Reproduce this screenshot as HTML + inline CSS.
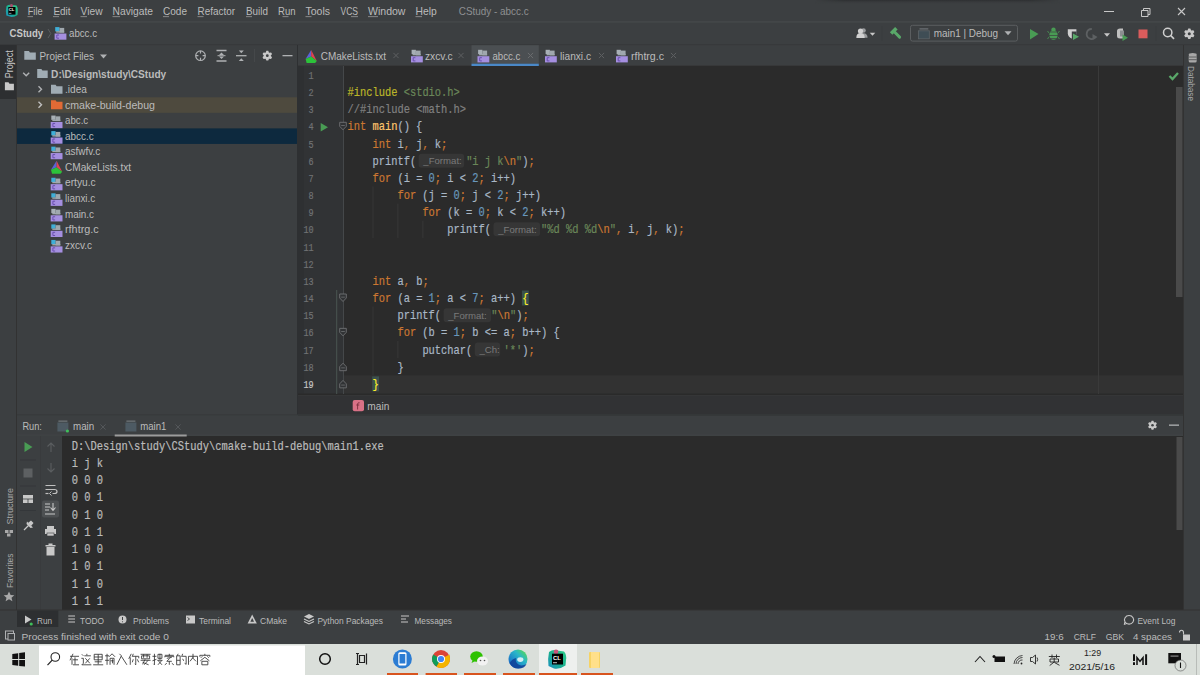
<!DOCTYPE html>
<html><head><meta charset="utf-8">
<style>
*{margin:0;padding:0}
html,body{width:1200px;height:675px;overflow:hidden;background:#3C3F41}
body{font-family:"Liberation Sans",sans-serif}
svg{display:block}
</style></head><body>
<svg width="1200" height="675" viewBox="0 0 1200 675">
<rect x="0.00" y="0.00" width="1200.00" height="675.00" fill="#3C3F41" />
<defs><linearGradient id="sh" x1="0" y1="0" x2="0" y2="1"><stop offset="0" stop-color="#2C2E30" stop-opacity="0.9"/><stop offset="1" stop-color="#3C3F41" stop-opacity="0"/></linearGradient><linearGradient id="shx" x1="0" y1="0" x2="1" y2="0"><stop offset="0" stop-color="#fff" stop-opacity="0"/><stop offset="0.12" stop-color="#fff" stop-opacity="1"/><stop offset="0.88" stop-color="#fff" stop-opacity="1"/><stop offset="1" stop-color="#fff" stop-opacity="0"/></linearGradient><mask id="shm"><rect x="815" y="0" width="245" height="5" fill="url(#shx)"/></mask></defs>
<rect x="815" y="0" width="245" height="4.5" fill="url(#sh)" mask="url(#shm)"/>
<rect x="0.00" y="21.20" width="1200.00" height="1.40" fill="#46494B" />
<rect x="0.00" y="44.20" width="1200.00" height="1.00" fill="#37393B" />
<rect x="16.00" y="45.00" width="1.00" height="565.00" fill="#323232" />
<rect x="0.00" y="45.00" width="16.00" height="54.00" fill="#2D2F31" />
<rect x="297.00" y="45.00" width="1.00" height="370.00" fill="#2E3032" />
<rect x="298.00" y="65.50" width="885.00" height="1.00" fill="#323232" />
<rect x="298.00" y="66.00" width="46.00" height="328.00" fill="#313335" />
<rect x="298.00" y="66.00" width="6.00" height="328.00" fill="#2E3032" />
<rect x="344.00" y="66.00" width="839.00" height="328.00" fill="#2B2B2B" />
<rect x="298.00" y="393.50" width="885.00" height="22.00" fill="#313234" />
<rect x="298.00" y="393.50" width="885.00" height="1.60" fill="#2A2A2A" />
<rect x="298.00" y="395.10" width="885.00" height="0.90" fill="#363738" />
<rect x="1183.00" y="45.00" width="1.00" height="565.00" fill="#323232" />
<rect x="17.00" y="434.60" width="1166.00" height="1.00" fill="#424547" />
<rect x="17.00" y="414.30" width="1166.00" height="1.00" fill="#37393B" />
<rect x="40.00" y="436.00" width="1.00" height="174.00" fill="#393B3D" />
<rect x="62.00" y="436.00" width="1121.00" height="174.00" fill="#2B2B2B" />
<rect x="0.00" y="609.50" width="1200.00" height="1.00" fill="#323232" />
<rect x="0.00" y="644.00" width="1200.00" height="31.00" fill="#DADFDA" />
<rect x="39.00" y="645.50" width="266.00" height="29.50" fill="#FFFFFF" />
<rect x="17.00" y="97.30" width="280.00" height="15.55" fill="#4E4A3E" />
<rect x="17.00" y="128.40" width="280.00" height="15.55" fill="#0D293E" />
<rect x="471.50" y="45.20" width="67.30" height="18.50" fill="#4B4F52" />
<rect x="471.50" y="63.70" width="67.30" height="2.30" fill="#4A88C7" />
<defs><linearGradient id="clg2" x1="1" y1="0" x2="0" y2="1"><stop offset="0" stop-color="#2FD08A"/><stop offset="0.55" stop-color="#1BAE90"/><stop offset="1" stop-color="#1C8FC4"/></linearGradient></defs>
<path d="M6.5 6 Q9 4.3 11.5 5 L16.5 5.5 Q18.3 8 17.8 11 L17.5 15 Q14 17.3 10.5 16.8 L6.3 15.5 Q5.4 10.5 6.5 6 Z" fill="url(#clg2)"/>
<circle cx="11.5" cy="5.6" r="1.6" fill="#A8506E"/>
<rect x="8.30" y="7.00" width="7.20" height="7.60" fill="#000" />
<text x="8.8" y="11" font-family="'Liberation Sans'" font-weight="bold" font-size="4.2" fill="#fff">CL</text>
<rect x="8.80" y="12.90" width="2.60" height="0.70" fill="#ccc" />
<rect x="1104.00" y="11.00" width="10.00" height="1.00" fill="#C8C8C8" />
<path d="M1141.5 10.5 h6.5 v6 h-6.5 Z M1143.5 10.5 v-2 h6.5 v6 h-2" stroke="#C8C8C8" stroke-width="1" fill="none"/>
<path d="M1178 8 L1185 15 M1185 8 L1178 15" stroke="#C8C8C8" stroke-width="1.1"/>
<path d="M48 29 l2.8 4.5 l-2.8 4.5" stroke="#5A5D5F" stroke-width="1" fill="none"/>
<rect x="55.20" y="27.10" width="4.3" height="4.3" fill="#3FAFD8"/>
<rect x="59.50" y="27.90" width="4.7" height="4.7" fill="#A0A8AE"/>
<rect x="56.20" y="31.20" width="8" height="1.4" fill="#A0A8AE"/>
<rect x="54.60" y="33.50" width="11.8" height="6.2" fill="#A58FE0"/>
<path d="M59.00 35.00 h-2.2 v3.2 h2.2" stroke="#6B4FAF" stroke-width="1" fill="none"/>
<circle cx="863.5" cy="30.5" r="2.3" fill="#9A9C9E"/><path d="M859.5 37.8 q0 -4.6 4 -4.6 q4 0 4 4.6 Z" fill="#9A9C9E"/>
<circle cx="860.5" cy="31" r="2.6" fill="#D0D0D0"/><path d="M856.3 38 q0 -5 4.2 -5 q4.2 0 4.2 5 Z" fill="#D0D0D0"/>
<path d="M869.75 32.80 h5.50 l-2.75 3.00 Z" fill="#C8C8C8"/>
<rect x="881.50" y="26.00" width="1.00" height="15.00" fill="#393C3E" />
<path d="M893.8 31.3 L899.6 37.1" stroke="#59A869" stroke-width="2.9" stroke-linecap="round"/>
<path d="M889.9 32.3 L895.1 27.1 L897.6 29.6 L892.4 34.8 Z" fill="#59A869"/>
<rect x="910.5" y="25.3" width="107" height="15.8" rx="2" fill="none" stroke="#5B5E60" stroke-width="1"/>
<rect x="918.5" y="30.8" width="10.8" height="8" fill="#3F4D55" stroke="#5E6468" stroke-width="0.8"/><rect x="919.5" y="28.3" width="8.8" height="1.2" fill="#6E7478"/>
<path d="M1004.50 31.20 h7.00 l-3.50 4.00 Z" fill="#AFB1B3"/>
<path d="M1030 29 L1038.5 34 L1030 39.5 Z" fill="#499C54"/>
<ellipse cx="1053.5" cy="35" rx="4.2" ry="4.8" fill="#499C54"/><circle cx="1053.5" cy="29.8" r="2.2" fill="#499C54"/>
<path d="M1048 32 h11 M1048 35.5 h11 M1048.5 38.5 h10" stroke="#3C3F41" stroke-width="0.7"/>
<path d="M1047.5 31.5 l1.5 1 M1059.5 31.5 l-1.5 1 M1047.5 38.5 l1.5 -1 M1059.5 38.5 l-1.5 -1" stroke="#499C54" stroke-width="1"/>
<path d="M1067.8 29.3 h8.6 v4 q0 4 -4.3 5.4 q-4.3 -1.4 -4.3 -5.4 Z" fill="#CFCFCF"/>
<path d="M1071.8 31.5 h4.8 v7.5 h-4.8 Z" fill="#3C3F41"/>
<path d="M1073 33.6 l6 3.2 l-6 3.2 Z" fill="#59A869"/>
<path d="M1091.8 29 a5 5 0 1 0 4.2 7.5" stroke="#5D6062" stroke-width="1.8" fill="none"/><path d="M1092.5 34 l5 3 l-5 3 Z" fill="#5D6062"/>
<path d="M1104.00 33.25 h6.00 l-3.00 3.50 Z" fill="#C8C8C8"/>
<path d="M1117 31 q0 -2.5 3 -2.5 h3 v10 h-3 q-3 0 -3 -2.5 Z" fill="#C0C0C0"/><rect x="1120" y="30.5" width="4" height="6" fill="#8C8E90"/>
<path d="M1122.5 34.5 l5.5 3.2 l-5.5 3.2 Z" fill="#499C54"/>
<rect x="1138.50" y="29.50" width="9.00" height="8.80" fill="#DB5C5C" />
<rect x="1155.50" y="26.00" width="1.00" height="15.00" fill="#393C3E" />
<circle cx="1167.7" cy="32.5" r="4.2" stroke="#CFCFCF" stroke-width="1.5" fill="none"/><path d="M1170.7 35.5 L1174 38.8" stroke="#CFCFCF" stroke-width="1.7"/>
<path d="M1187.46 30.52 L1188.27 28.40 L1190.33 28.40 L1191.14 30.52 L1191.14 30.52 L1193.38 30.16 L1194.41 31.94 L1192.97 33.70 L1192.97 33.70 L1194.41 35.46 L1193.38 37.24 L1191.14 36.88 L1191.14 36.88 L1190.33 39.00 L1188.27 39.00 L1187.46 36.88 L1187.46 36.88 L1185.22 37.24 L1184.19 35.46 L1185.63 33.70 L1185.63 33.70 L1184.19 31.94 L1185.22 30.16 L1187.46 30.52 Z" fill="#C8C8C8"/>
<circle cx="1189.3" cy="33.7" r="1.51" fill="#3C3F41"/>
<g transform="translate(13.3 78.2) rotate(-90)">
<text x="0.00" y="0.00" font-family='"Liberation Sans"' font-size="10" fill="#C8C8C8" textLength="28.02" lengthAdjust="spacingAndGlyphs"  xml:space="preserve">Project</text>
</g>
<path d="M4.90 82.20 h3.60 l1 1.5 h4.40 v6.50 h-9.00 Z" fill="#C8C8C8"/>
<g transform="translate(13 524.6) rotate(-90)">
<text x="0.00" y="0.00" font-family='"Liberation Sans"' font-size="9.4" fill="#A8A8A8" textLength="36.62" lengthAdjust="spacingAndGlyphs"  xml:space="preserve">Structure</text>
</g>
<rect x="5" y="530" width="3.5" height="3" fill="#A8A8A8"/><rect x="9.5" y="530" width="3.5" height="3" fill="#A8A8A8"/><rect x="7" y="533.5" width="3.5" height="3" fill="#A8A8A8"/>
<g transform="translate(13 588) rotate(-90)">
<text x="0.00" y="0.00" font-family='"Liberation Sans"' font-size="9.4" fill="#A8A8A8" textLength="34.42" lengthAdjust="spacingAndGlyphs"  xml:space="preserve">Favorites</text>
</g>
<path d="M9 591.5 L10.6 595 L14.3 595.3 L11.5 597.7 L12.4 601.3 L9 599.3 L5.6 601.3 L6.5 597.7 L3.7 595.3 L7.4 595 Z" fill="#A8A8A8"/>
<g transform="translate(1188 66) rotate(90)">
<text x="0.00" y="0.00" font-family='"Liberation Sans"' font-size="8.6" fill="#A8A8A8" textLength="35.01" lengthAdjust="spacingAndGlyphs"  xml:space="preserve">Database</text>
</g>
<ellipse cx="1192.7" cy="54.5" rx="4" ry="1.5" fill="#A8A8A8"/><rect x="1188.7" y="54.5" width="8" height="8" rx="1.5" fill="#A8A8A8"/><path d="M1188.7 57 h8 M1188.7 59.7 h8" stroke="#3C3F41" stroke-width="0.7"/>
<path d="M24.30 51.00 h4.60 l1 1.5 h5.90 v7.20 h-11.50 Z" fill="#A0ACB4"/>
<path d="M100.00 54.60 h7.00 l-3.50 3.80 Z" fill="#AFB1B3"/>
<circle cx="200.5" cy="55.7" r="4.8" stroke="#AFB1B3" stroke-width="1.2" fill="none"/><path d="M200.5 51 v2.6 M200.5 57.8 v2.6 M195.8 55.7 h2.6 M202.6 55.7 h2.6" stroke="#AFB1B3" stroke-width="1.2"/>
<path d="M216.5 50.5 h10 M216.5 61 h10" stroke="#AFB1B3" stroke-width="1.3"/><path d="M219 55 l2.5 -2.5 l2.5 2.5 Z M219 56.5 l2.5 2.5 l2.5 -2.5 Z" fill="#AFB1B3"/><path d="M217.5 55.7 h8" stroke="#AFB1B3" stroke-width="1"/>
<path d="M236 55.7 h10.5" stroke="#AFB1B3" stroke-width="1.3"/><path d="M238.8 50.5 l2.5 2.8 l2.5 -2.8 Z M238.8 61 l2.5 -2.8 l2.5 2.8 Z" fill="#AFB1B3"/>
<rect x="254.00" y="49.00" width="1.00" height="13.00" fill="#45484A" />
<path d="M265.60 52.76 L266.35 50.79 L268.25 50.79 L269.00 52.76 L269.00 52.76 L271.07 52.42 L272.03 54.07 L270.70 55.70 L270.70 55.70 L272.03 57.33 L271.07 58.98 L269.00 58.64 L269.00 58.64 L268.25 60.61 L266.35 60.61 L265.60 58.64 L265.60 58.64 L263.53 58.98 L262.57 57.33 L263.90 55.70 L263.90 55.70 L262.57 54.07 L263.53 52.42 L265.60 52.76 Z" fill="#C8C8C8"/>
<circle cx="267.3" cy="55.7" r="1.40" fill="#3C3F41"/>
<rect x="282.50" y="55.00" width="10.00" height="1.30" fill="#AFB1B3" />
<path d="M23.20 72.70 l3 3 l3 -3" stroke="#AFB1B3" stroke-width="1.4" fill="none"/>
<path d="M37.20 69.00 h4.20 l1 1.5 h5.30 v7.50 h-10.50 Z" fill="#A0ACB4"/>
<path d="M38.50 86.25 l3 3 l-3 3" stroke="#AFB1B3" stroke-width="1.4" fill="none"/>
<path d="M51.00 84.75 h4.60 l1 1.5 h5.90 v7.50 h-11.50 Z" fill="#A0ACB4"/>
<path d="M38.50 101.80 l3 3 l-3 3" stroke="#C0C0C0" stroke-width="1.4" fill="none"/>
<path d="M51.00 100.30 h4.60 l1 1.5 h5.90 v7.50 h-11.50 Z" fill="#E26A35"/>
<rect x="51.30" y="115.55" width="4.3" height="4.3" fill="#A8B0B6"/>
<rect x="55.60" y="116.35" width="4.7" height="4.7" fill="#A0A8AE"/>
<rect x="52.30" y="119.65" width="8" height="1.4" fill="#A0A8AE"/>
<rect x="50.70" y="121.95" width="11.8" height="6.2" fill="#A58FE0"/>
<path d="M55.10 123.45 h-2.2 v3.2 h2.2" stroke="#6B4FAF" stroke-width="1" fill="none"/>
<rect x="51.30" y="131.10" width="4.3" height="4.3" fill="#3FAFD8"/>
<rect x="55.60" y="131.90" width="4.7" height="4.7" fill="#A0A8AE"/>
<rect x="52.30" y="135.20" width="8" height="1.4" fill="#A0A8AE"/>
<rect x="50.70" y="137.50" width="11.8" height="6.2" fill="#A58FE0"/>
<path d="M55.10 139.00 h-2.2 v3.2 h2.2" stroke="#6B4FAF" stroke-width="1" fill="none"/>
<rect x="51.30" y="146.65" width="4.3" height="4.3" fill="#3FAFD8"/>
<rect x="55.60" y="147.45" width="4.7" height="4.7" fill="#A0A8AE"/>
<rect x="52.30" y="150.75" width="8" height="1.4" fill="#A0A8AE"/>
<rect x="50.70" y="153.05" width="11.8" height="6.2" fill="#A58FE0"/>
<path d="M55.10 154.55 h-2.2 v3.2 h2.2" stroke="#6B4FAF" stroke-width="1" fill="none"/>
<path d="M56.60 160.70 L51.00 169.70 L56.60 167.20 Z" fill="#5A62D6"/>
<path d="M56.60 160.70 L62.20 171.70 L56.60 167.20 Z" fill="#E0424F"/>
<path d="M51.00 169.70 L56.60 167.20 L62.20 171.70 L60.50 173.70 L52.00 173.70 Z" fill="#2CC23A"/>
<rect x="51.30" y="177.75" width="4.3" height="4.3" fill="#3FAFD8"/>
<rect x="55.60" y="178.55" width="4.7" height="4.7" fill="#A0A8AE"/>
<rect x="52.30" y="181.85" width="8" height="1.4" fill="#A0A8AE"/>
<rect x="50.70" y="184.15" width="11.8" height="6.2" fill="#A58FE0"/>
<path d="M55.10 185.65 h-2.2 v3.2 h2.2" stroke="#6B4FAF" stroke-width="1" fill="none"/>
<rect x="51.30" y="193.30" width="4.3" height="4.3" fill="#3FAFD8"/>
<rect x="55.60" y="194.10" width="4.7" height="4.7" fill="#A0A8AE"/>
<rect x="52.30" y="197.40" width="8" height="1.4" fill="#A0A8AE"/>
<rect x="50.70" y="199.70" width="11.8" height="6.2" fill="#A58FE0"/>
<path d="M55.10 201.20 h-2.2 v3.2 h2.2" stroke="#6B4FAF" stroke-width="1" fill="none"/>
<rect x="51.30" y="208.85" width="4.3" height="4.3" fill="#A8B0B6"/>
<rect x="55.60" y="209.65" width="4.7" height="4.7" fill="#A0A8AE"/>
<rect x="52.30" y="212.95" width="8" height="1.4" fill="#A0A8AE"/>
<rect x="50.70" y="215.25" width="11.8" height="6.2" fill="#A58FE0"/>
<path d="M55.10 216.75 h-2.2 v3.2 h2.2" stroke="#6B4FAF" stroke-width="1" fill="none"/>
<rect x="51.30" y="224.40" width="4.3" height="4.3" fill="#3FAFD8"/>
<rect x="55.60" y="225.20" width="4.7" height="4.7" fill="#A0A8AE"/>
<rect x="52.30" y="228.50" width="8" height="1.4" fill="#A0A8AE"/>
<rect x="50.70" y="230.80" width="11.8" height="6.2" fill="#A58FE0"/>
<path d="M55.10 232.30 h-2.2 v3.2 h2.2" stroke="#6B4FAF" stroke-width="1" fill="none"/>
<rect x="51.30" y="239.95" width="4.3" height="4.3" fill="#3FAFD8"/>
<rect x="55.60" y="240.75" width="4.7" height="4.7" fill="#A0A8AE"/>
<rect x="52.30" y="244.05" width="8" height="1.4" fill="#A0A8AE"/>
<rect x="50.70" y="246.35" width="11.8" height="6.2" fill="#A58FE0"/>
<path d="M55.10 247.85 h-2.2 v3.2 h2.2" stroke="#6B4FAF" stroke-width="1" fill="none"/>
<path d="M311.20 50.00 L305.60 59.00 L311.20 56.50 Z" fill="#5A62D6"/>
<path d="M311.20 50.00 L316.80 61.00 L311.20 56.50 Z" fill="#E0424F"/>
<path d="M305.60 59.00 L311.20 56.50 L316.80 61.00 L315.10 63.00 L306.60 63.00 Z" fill="#2CC23A"/>
<path d="M393.40 52.90 L398.60 58.10 M398.60 52.90 L393.40 58.10" stroke="#5E6062" stroke-width="1"/>
<rect x="411.60" y="49.80" width="4.3" height="4.3" fill="#A8B0B6"/>
<rect x="415.90" y="50.60" width="4.7" height="4.7" fill="#A0A8AE"/>
<rect x="412.60" y="53.90" width="8" height="1.4" fill="#A0A8AE"/>
<rect x="411.00" y="56.20" width="11.8" height="6.2" fill="#A58FE0"/>
<path d="M415.40 57.70 h-2.2 v3.2 h2.2" stroke="#6B4FAF" stroke-width="1" fill="none"/>
<path d="M458.40 52.90 L463.60 58.10 M463.60 52.90 L458.40 58.10" stroke="#5E6062" stroke-width="1"/>
<rect x="478.10" y="49.80" width="4.3" height="4.3" fill="#A8B0B6"/>
<rect x="482.40" y="50.60" width="4.7" height="4.7" fill="#A0A8AE"/>
<rect x="479.10" y="53.90" width="8" height="1.4" fill="#A0A8AE"/>
<rect x="477.50" y="56.20" width="11.8" height="6.2" fill="#A58FE0"/>
<path d="M481.90 57.70 h-2.2 v3.2 h2.2" stroke="#6B4FAF" stroke-width="1" fill="none"/>
<path d="M527.90 52.90 L533.10 58.10 M533.10 52.90 L527.90 58.10" stroke="#6A6C6E" stroke-width="1"/>
<rect x="545.60" y="49.80" width="4.3" height="4.3" fill="#A8B0B6"/>
<rect x="549.90" y="50.60" width="4.7" height="4.7" fill="#A0A8AE"/>
<rect x="546.60" y="53.90" width="8" height="1.4" fill="#A0A8AE"/>
<rect x="545.00" y="56.20" width="11.8" height="6.2" fill="#A58FE0"/>
<path d="M549.40 57.70 h-2.2 v3.2 h2.2" stroke="#6B4FAF" stroke-width="1" fill="none"/>
<path d="M598.90 52.90 L604.10 58.10 M604.10 52.90 L598.90 58.10" stroke="#5E6062" stroke-width="1"/>
<rect x="616.60" y="49.80" width="4.3" height="4.3" fill="#A8B0B6"/>
<rect x="620.90" y="50.60" width="4.7" height="4.7" fill="#A0A8AE"/>
<rect x="617.60" y="53.90" width="8" height="1.4" fill="#A0A8AE"/>
<rect x="616.00" y="56.20" width="11.8" height="6.2" fill="#A58FE0"/>
<path d="M620.40 57.70 h-2.2 v3.2 h2.2" stroke="#6B4FAF" stroke-width="1" fill="none"/>
<path d="M670.90 52.90 L676.10 58.10 M676.10 52.90 L670.90 58.10" stroke="#5E6062" stroke-width="1"/>
<rect x="344.00" y="375.40" width="839.00" height="18.00" fill="#323232" />
<rect x="521.92" y="290.54" width="6.84" height="15.00" fill="#3B514D" />
<rect x="372.16" y="376.39" width="6.84" height="15.00" fill="#3B514D" />
<rect x="1098.00" y="66.00" width="1.00" height="328.00" fill="#3A3A3A" />
<rect x="343.00" y="66.00" width="1.00" height="328.00" fill="#45484A" />
<rect x="372.46" y="186.42" width="1.00" height="51.54" fill="#373737" />
<rect x="397.42" y="203.59" width="1.00" height="34.37" fill="#373737" />
<rect x="422.38" y="220.76" width="1.00" height="17.20" fill="#373737" />
<rect x="372.46" y="306.61" width="1.00" height="68.71" fill="#373737" />
<rect x="397.42" y="340.95" width="1.00" height="17.20" fill="#373737" />
<path d="M320.7 123 L328 127.3 L320.7 131.6 Z" fill="#499C54"/>
<rect x="336.20" y="290.00" width="1.00" height="104.00" fill="#4A5551" />
<path d="M339.7 122.31 h6.6 v4 l-3.3 3.5 l-3.3 -3.5 Z" stroke="#707274" stroke-width="0.9" fill="#313335"/>
<rect x="341.20" y="125.01" width="3.60" height="0.80" fill="#707274" />
<path d="M339.7 294.01 h6.6 v4 l-3.3 3.5 l-3.3 -3.5 Z" stroke="#707274" stroke-width="0.9" fill="#313335"/>
<rect x="341.20" y="296.71" width="3.60" height="0.80" fill="#707274" />
<path d="M339.7 328.35 h6.6 v4 l-3.3 3.5 l-3.3 -3.5 Z" stroke="#707274" stroke-width="0.9" fill="#313335"/>
<rect x="341.20" y="331.05" width="3.60" height="0.80" fill="#707274" />
<path d="M339.7 370.69 h6.6 v-4 l-3.3 -3.5 l-3.3 3.5 Z" stroke="#707274" stroke-width="0.9" fill="#313335"/>
<rect x="341.20" y="367.49" width="3.60" height="0.80" fill="#707274" />
<path d="M339.7 387.86 h6.6 v-4 l-3.3 -3.5 l-3.3 3.5 Z" stroke="#707274" stroke-width="0.9" fill="#313335"/>
<rect x="341.20" y="384.66" width="3.60" height="0.80" fill="#707274" />
<path d="M1169.5 76 L1172.5 79 L1178 73" stroke="#59A869" stroke-width="2.3" fill="none"/>
<rect x="1176.00" y="87.00" width="6.50" height="210.00" fill="#4A4A4A" />
<rect x="352.7" y="400" width="11.3" height="11.3" rx="2" fill="#D97186"/>
<path d="M359.6 402.8 q-1.8 -0.5 -2 1.2 v5.5 M356.3 405 h3" stroke="#7A2E3C" stroke-width="0.9" fill="none"/>
<rect x="57.40" y="422.5" width="11" height="9" fill="#4D5A63"/><rect x="58.40" y="420.5" width="9" height="1.3" fill="#6E7478"/>
<circle cx="67.40" cy="431" r="1.6" fill="#3FBF5A"/>
<rect x="125.40" y="422.5" width="11" height="9" fill="#4D5A63"/><rect x="126.40" y="420.5" width="9" height="1.3" fill="#6E7478"/>
<path d="M100.40 424.40 L105.60 429.60 M105.60 424.40 L100.40 429.60" stroke="#54575A" stroke-width="1"/>
<path d="M175.40 424.40 L180.60 429.60 M180.60 424.40 L175.40 429.60" stroke="#54575A" stroke-width="1"/>
<path d="M1150.94 422.49 L1151.62 420.68 L1153.38 420.68 L1154.06 422.49 L1154.06 422.49 L1155.97 422.18 L1156.85 423.70 L1155.63 425.20 L1155.63 425.20 L1156.85 426.70 L1155.97 428.22 L1154.06 427.91 L1154.06 427.91 L1153.38 429.72 L1151.62 429.72 L1150.94 427.91 L1150.94 427.91 L1149.03 428.22 L1148.15 426.70 L1149.37 425.20 L1149.37 425.20 L1148.15 423.70 L1149.03 422.18 L1150.94 422.49 Z" fill="#C8C8C8"/>
<circle cx="1152.5" cy="425.2" r="1.29" fill="#3C3F41"/>
<rect x="1169.00" y="424.50" width="10.00" height="1.30" fill="#AFB1B3" />
<path d="M24.5 442 L32.5 447 L24.5 452 Z" fill="#499C54"/>
<path d="M51 443 v9 M47.5 446.5 l3.5 -3.5 l3.5 3.5" stroke="#5B5E60" stroke-width="1.1" fill="none"/>
<path d="M51 463 v9 M47.5 468.5 l3.5 3.5 l3.5 -3.5" stroke="#5B5E60" stroke-width="1.1" fill="none"/>
<rect x="23.50" y="468.50" width="9.00" height="9.00" fill="#5D6062" />
<rect x="20.00" y="459.50" width="16.00" height="1.00" fill="#34373A" />
<rect x="20.00" y="485.50" width="16.00" height="1.00" fill="#34373A" />
<rect x="20.00" y="510.00" width="16.00" height="1.00" fill="#34373A" />
<path d="M45.5 485.5 h10 M45.5 489.5 h9 q2.5 0 2.5 2 q0 2 -2.5 2 h-2" stroke="#C0C0C0" stroke-width="1.2" fill="none"/><path d="M51.5 491.5 l-2 2 l2 2" stroke="#C0C0C0" stroke-width="1" fill="none"/><path d="M45.5 493.5 h3" stroke="#C0C0C0" stroke-width="1.2"/>
<rect x="23" y="495" width="10" height="3.6" fill="#C8C8C8"/><rect x="23" y="499.4" width="4.6" height="3.6" fill="#C8C8C8"/><rect x="28.4" y="499.4" width="4.6" height="3.6" fill="#C8C8C8"/>
<rect x="42" y="500.5" width="17" height="17" rx="2" fill="#4D5052"/>
<path d="M45 504 h5 M45 507 h5 M45 510 h4 M45 514 h10 M53 503 v7 M50.5 507.5 l2.5 2.8 l2.5 -2.8" stroke="#C8C8C8" stroke-width="1.1" fill="none"/>
<path d="M24 530 L28.5 525.5" stroke="#C8C8C8" stroke-width="1.2"/><path d="M27 521.5 L33 527.5 L30.5 528 L26.5 524 Z" fill="#C8C8C8"/><path d="M28 523 l3 -2.5 l2.5 2.5 l-2.5 3 Z" fill="#C8C8C8"/>
<rect x="47" y="526" width="7" height="3" fill="#C8C8C8"/><rect x="45" y="529" width="11" height="5" fill="#C8C8C8"/><rect x="47" y="533" width="7" height="3" fill="#C8C8C8" stroke="#3C3F41" stroke-width="0.6"/>
<rect x="45.5" y="545" width="10" height="1.5" fill="#C8C8C8"/><rect x="48.5" y="543.5" width="4" height="1.5" fill="#C8C8C8"/><rect x="46.5" y="547" width="8" height="8.5" fill="#C8C8C8"/>
<rect x="1176.50" y="437.00" width="6.00" height="93.00" fill="#4A4A4A" />
<rect x="17.00" y="610.50" width="41.30" height="16.50" fill="#2D2F31" />
<path d="M25 615.5 L31.5 619.5 L25 623.5 Z" fill="#C8C8C8"/><circle cx="31.2" cy="624" r="1.6" fill="#3FBF5A"/>
<path d="M68 616 h7 M68 619 h7 M68 622 h7" stroke="#C8C8C8" stroke-width="1.1"/><path d="M68 616 h1 M68 619 h1 M68 622 h1" stroke="#3C3F41" stroke-width="0.5"/>
<circle cx="122.5" cy="619.5" r="4" fill="#C8C8C8"/><path d="M122.5 617 v3" stroke="#3C3F41" stroke-width="1"/><circle cx="122.5" cy="621.8" r="0.55" fill="#3C3F41"/>
<rect x="186" y="615.5" width="9" height="8" fill="#C8C8C8"/><path d="M187.5 617.5 l2 1.5 l-2 1.5" stroke="#3C3F41" stroke-width="0.9" fill="none"/>
<path d="M252.2 614.5 L256.8 623.5 L247.6 623.5 Z" fill="#C8C8C8"/><path d="M252.2 618 L254 621.8 L250.4 621.8 Z" fill="#3C3F41"/>
<path d="M309 614 L314 616.5 L309 619 L304 616.5 Z" fill="#C8C8C8"/><path d="M304 619 L309 621.5 L314 619 M304 621.5 L309 624 L314 621.5" stroke="#C8C8C8" stroke-width="1.1" fill="none"/>
<path d="M401 616 h8 M401 619 h5 M401 622 h7" stroke="#C8C8C8" stroke-width="1.2"/>
<path d="M1129 615.5 a4.6 4.3 0 1 0 0.1 0 Z" stroke="#C8C8C8" stroke-width="1.1" fill="none"/><path d="M1125 622 l-0.8 2.5 l3 -1.2" stroke="#C8C8C8" stroke-width="1" fill="none"/>
<rect x="5.5" y="631" width="8" height="8" stroke="#AFB1B3" stroke-width="1" fill="none"/><rect x="8" y="633.5" width="6.5" height="6.5" fill="#3C3F41" stroke="#AFB1B3" stroke-width="1"/>
<rect x="1183" y="634.5" width="7" height="6" fill="#C8C8C8"/><path d="M1183.5 634.5 v-2 q0 -2.2 -2 -2.2 q-2 0 -2 2.2" stroke="#C8C8C8" stroke-width="1.1" fill="none"/>
<text x="27.75" y="15.00" font-family='"Liberation Sans"' font-size="10.2" fill="#BBBBBB" textLength="14.76" lengthAdjust="spacingAndGlyphs"  xml:space="preserve">File</text>
<text x="53.50" y="15.00" font-family='"Liberation Sans"' font-size="10.2" fill="#BBBBBB" textLength="16.98" lengthAdjust="spacingAndGlyphs"  xml:space="preserve">Edit</text>
<text x="80.60" y="15.00" font-family='"Liberation Sans"' font-size="10.2" fill="#BBBBBB" textLength="22.00" lengthAdjust="spacingAndGlyphs"  xml:space="preserve">View</text>
<text x="112.60" y="15.00" font-family='"Liberation Sans"' font-size="10.2" fill="#BBBBBB" textLength="40.42" lengthAdjust="spacingAndGlyphs"  xml:space="preserve">Navigate</text>
<text x="163.00" y="15.00" font-family='"Liberation Sans"' font-size="10.2" fill="#BBBBBB" textLength="24.01" lengthAdjust="spacingAndGlyphs"  xml:space="preserve">Code</text>
<text x="197.60" y="15.00" font-family='"Liberation Sans"' font-size="10.2" fill="#BBBBBB" textLength="37.39" lengthAdjust="spacingAndGlyphs"  xml:space="preserve">Refactor</text>
<text x="246.00" y="15.00" font-family='"Liberation Sans"' font-size="10.2" fill="#BBBBBB" textLength="21.99" lengthAdjust="spacingAndGlyphs"  xml:space="preserve">Build</text>
<text x="278.00" y="15.00" font-family='"Liberation Sans"' font-size="10.2" fill="#BBBBBB" textLength="17.50" lengthAdjust="spacingAndGlyphs"  xml:space="preserve">Run</text>
<text x="305.50" y="15.00" font-family='"Liberation Sans"' font-size="10.2" fill="#BBBBBB" textLength="24.50" lengthAdjust="spacingAndGlyphs"  xml:space="preserve">Tools</text>
<text x="340.50" y="15.00" font-family='"Liberation Sans"' font-size="10.2" fill="#BBBBBB" textLength="17.51" lengthAdjust="spacingAndGlyphs"  xml:space="preserve">VCS</text>
<text x="368.00" y="15.00" font-family='"Liberation Sans"' font-size="10.2" fill="#BBBBBB" textLength="37.47" lengthAdjust="spacingAndGlyphs"  xml:space="preserve">Window</text>
<text x="415.50" y="15.00" font-family='"Liberation Sans"' font-size="10.2" fill="#BBBBBB" textLength="21.27" lengthAdjust="spacingAndGlyphs"  xml:space="preserve">Help</text>
<rect x="27.50" y="16.30" width="5.50" height="0.80" fill="#9A9A9A" />
<rect x="53.00" y="16.30" width="6.00" height="0.80" fill="#9A9A9A" />
<rect x="80.50" y="16.30" width="6.50" height="0.80" fill="#9A9A9A" />
<rect x="112.50" y="16.30" width="7.50" height="0.80" fill="#9A9A9A" />
<rect x="163.00" y="16.30" width="6.00" height="0.80" fill="#9A9A9A" />
<rect x="197.50" y="16.30" width="6.00" height="0.80" fill="#9A9A9A" />
<rect x="246.00" y="16.30" width="6.00" height="0.80" fill="#9A9A9A" />
<rect x="282.50" y="16.30" width="6.00" height="0.80" fill="#9A9A9A" />
<rect x="305.50" y="16.30" width="6.00" height="0.80" fill="#9A9A9A" />
<rect x="351.00" y="16.30" width="7.00" height="0.80" fill="#9A9A9A" />
<rect x="368.00" y="16.30" width="10.00" height="0.80" fill="#9A9A9A" />
<rect x="415.50" y="16.30" width="6.50" height="0.80" fill="#9A9A9A" />
<text x="458.75" y="15.00" font-family='"Liberation Sans"' font-size="10.2" fill="#8E9092" textLength="69.98" lengthAdjust="spacingAndGlyphs"  xml:space="preserve">CStudy - abcc.c</text>
<text x="9.60" y="37.10" font-family='"Liberation Sans"' font-size="10.2" font-weight="bold" fill="#C8C8C8" textLength="33.50" lengthAdjust="spacingAndGlyphs"  xml:space="preserve">CStudy</text>
<text x="69.00" y="37.10" font-family='"Liberation Sans"' font-size="10.2" fill="#BBBBBB" textLength="28.00" lengthAdjust="spacingAndGlyphs"  xml:space="preserve">abcc.c</text>
<text x="933.70" y="37.00" font-family='"Liberation Sans"' font-size="10.2" fill="#BBBBBB" textLength="64.31" lengthAdjust="spacingAndGlyphs"  xml:space="preserve">main1 | Debug</text>
<text x="39.50" y="59.70" font-family='"Liberation Sans"' font-size="10.2" fill="#BBBBBB" textLength="54.52" lengthAdjust="spacingAndGlyphs"  xml:space="preserve">Project Files</text>
<text x="51.10" y="77.60" font-family='"Liberation Sans"' font-size="10.2" font-weight="bold" fill="#BBBBBB" textLength="115.10" lengthAdjust="spacingAndGlyphs"  xml:space="preserve">D:\Design\study\CStudy</text>
<text x="65.00" y="93.15" font-family='"Liberation Sans"' font-size="10.2" fill="#BBBBBB" textLength="21.89" lengthAdjust="spacingAndGlyphs"  xml:space="preserve">.idea</text>
<text x="65.00" y="108.70" font-family='"Liberation Sans"' font-size="10.2" fill="#BBBBBB" textLength="89.90" lengthAdjust="spacingAndGlyphs"  xml:space="preserve">cmake-build-debug</text>
<text x="65.00" y="124.25" font-family='"Liberation Sans"' font-size="10.2" fill="#BBBBBB" textLength="23.20" lengthAdjust="spacingAndGlyphs"  xml:space="preserve">abc.c</text>
<text x="65.00" y="139.80" font-family='"Liberation Sans"' font-size="10.2" fill="#BBBBBB" textLength="28.70" lengthAdjust="spacingAndGlyphs"  xml:space="preserve">abcc.c</text>
<text x="65.00" y="155.35" font-family='"Liberation Sans"' font-size="10.2" fill="#BBBBBB" textLength="35.28" lengthAdjust="spacingAndGlyphs"  xml:space="preserve">asfwfv.c</text>
<text x="65.00" y="170.90" font-family='"Liberation Sans"' font-size="10.2" fill="#BBBBBB" textLength="66.02" lengthAdjust="spacingAndGlyphs"  xml:space="preserve">CMakeLists.txt</text>
<text x="65.00" y="186.45" font-family='"Liberation Sans"' font-size="10.2" fill="#BBBBBB" textLength="30.71" lengthAdjust="spacingAndGlyphs"  xml:space="preserve">ertyu.c</text>
<text x="65.00" y="202.00" font-family='"Liberation Sans"' font-size="10.2" fill="#BBBBBB" textLength="30.22" lengthAdjust="spacingAndGlyphs"  xml:space="preserve">lianxi.c</text>
<text x="65.00" y="217.55" font-family='"Liberation Sans"' font-size="10.2" fill="#BBBBBB" textLength="29.00" lengthAdjust="spacingAndGlyphs"  xml:space="preserve">main.c</text>
<text x="65.00" y="233.10" font-family='"Liberation Sans"' font-size="10.2" fill="#BBBBBB" textLength="33.72" lengthAdjust="spacingAndGlyphs"  xml:space="preserve">rfhtrg.c</text>
<text x="65.00" y="248.65" font-family='"Liberation Sans"' font-size="10.2" fill="#BBBBBB" textLength="26.99" lengthAdjust="spacingAndGlyphs"  xml:space="preserve">zxcv.c</text>
<text x="320.70" y="59.75" font-family='"Liberation Sans"' font-size="10.2" fill="#BBBBBB" textLength="65.32" lengthAdjust="spacingAndGlyphs"  xml:space="preserve">CMakeLists.txt</text>
<text x="425.00" y="59.75" font-family='"Liberation Sans"' font-size="10.2" fill="#BBBBBB" textLength="27.69" lengthAdjust="spacingAndGlyphs"  xml:space="preserve">zxcv.c</text>
<text x="492.50" y="59.75" font-family='"Liberation Sans"' font-size="10.2" fill="#BBBBBB" textLength="27.80" lengthAdjust="spacingAndGlyphs"  xml:space="preserve">abcc.c</text>
<text x="560.00" y="59.75" font-family='"Liberation Sans"' font-size="10.2" fill="#BBBBBB" textLength="31.02" lengthAdjust="spacingAndGlyphs"  xml:space="preserve">lianxi.c</text>
<text x="631.00" y="59.75" font-family='"Liberation Sans"' font-size="10.2" fill="#BBBBBB" textLength="33.02" lengthAdjust="spacingAndGlyphs"  xml:space="preserve">rfhtrg.c</text>
<text x="308.60" y="78.83" font-family='"Liberation Mono"' font-size="10.6" fill="#707274" stroke="#707274" stroke-width="0.2" textLength="5.10" lengthAdjust="spacingAndGlyphs"  xml:space="preserve">1</text>
<text x="308.60" y="96.00" font-family='"Liberation Mono"' font-size="10.6" fill="#707274" stroke="#707274" stroke-width="0.2" textLength="5.10" lengthAdjust="spacingAndGlyphs"  xml:space="preserve">2</text>
<text x="308.60" y="113.17" font-family='"Liberation Mono"' font-size="10.6" fill="#707274" stroke="#707274" stroke-width="0.2" textLength="5.10" lengthAdjust="spacingAndGlyphs"  xml:space="preserve">3</text>
<text x="308.60" y="130.34" font-family='"Liberation Mono"' font-size="10.6" fill="#707274" stroke="#707274" stroke-width="0.2" textLength="5.10" lengthAdjust="spacingAndGlyphs"  xml:space="preserve">4</text>
<text x="308.60" y="147.51" font-family='"Liberation Mono"' font-size="10.6" fill="#707274" stroke="#707274" stroke-width="0.2" textLength="5.10" lengthAdjust="spacingAndGlyphs"  xml:space="preserve">5</text>
<text x="308.60" y="164.68" font-family='"Liberation Mono"' font-size="10.6" fill="#707274" stroke="#707274" stroke-width="0.2" textLength="5.10" lengthAdjust="spacingAndGlyphs"  xml:space="preserve">6</text>
<text x="308.60" y="181.85" font-family='"Liberation Mono"' font-size="10.6" fill="#707274" stroke="#707274" stroke-width="0.2" textLength="5.10" lengthAdjust="spacingAndGlyphs"  xml:space="preserve">7</text>
<text x="308.60" y="199.02" font-family='"Liberation Mono"' font-size="10.6" fill="#707274" stroke="#707274" stroke-width="0.2" textLength="5.10" lengthAdjust="spacingAndGlyphs"  xml:space="preserve">8</text>
<text x="308.60" y="216.19" font-family='"Liberation Mono"' font-size="10.6" fill="#707274" stroke="#707274" stroke-width="0.2" textLength="5.10" lengthAdjust="spacingAndGlyphs"  xml:space="preserve">9</text>
<text x="303.50" y="233.36" font-family='"Liberation Mono"' font-size="10.6" fill="#707274" stroke="#707274" stroke-width="0.2" textLength="10.20" lengthAdjust="spacingAndGlyphs"  xml:space="preserve">10</text>
<text x="303.50" y="250.53" font-family='"Liberation Mono"' font-size="10.6" fill="#707274" stroke="#707274" stroke-width="0.2" textLength="10.20" lengthAdjust="spacingAndGlyphs"  xml:space="preserve">11</text>
<text x="303.50" y="267.70" font-family='"Liberation Mono"' font-size="10.6" fill="#707274" stroke="#707274" stroke-width="0.2" textLength="10.20" lengthAdjust="spacingAndGlyphs"  xml:space="preserve">12</text>
<text x="303.50" y="284.87" font-family='"Liberation Mono"' font-size="10.6" fill="#707274" stroke="#707274" stroke-width="0.2" textLength="10.20" lengthAdjust="spacingAndGlyphs"  xml:space="preserve">13</text>
<text x="303.50" y="302.04" font-family='"Liberation Mono"' font-size="10.6" fill="#707274" stroke="#707274" stroke-width="0.2" textLength="10.20" lengthAdjust="spacingAndGlyphs"  xml:space="preserve">14</text>
<text x="303.50" y="319.21" font-family='"Liberation Mono"' font-size="10.6" fill="#707274" stroke="#707274" stroke-width="0.2" textLength="10.20" lengthAdjust="spacingAndGlyphs"  xml:space="preserve">15</text>
<text x="303.50" y="336.38" font-family='"Liberation Mono"' font-size="10.6" fill="#707274" stroke="#707274" stroke-width="0.2" textLength="10.20" lengthAdjust="spacingAndGlyphs"  xml:space="preserve">16</text>
<text x="303.50" y="353.55" font-family='"Liberation Mono"' font-size="10.6" fill="#707274" stroke="#707274" stroke-width="0.2" textLength="10.20" lengthAdjust="spacingAndGlyphs"  xml:space="preserve">17</text>
<text x="303.50" y="370.72" font-family='"Liberation Mono"' font-size="10.6" fill="#707274" stroke="#707274" stroke-width="0.2" textLength="10.20" lengthAdjust="spacingAndGlyphs"  xml:space="preserve">18</text>
<text x="303.50" y="387.89" font-family='"Liberation Mono"' font-size="10.6" fill="#C8C8C8" stroke="#C8C8C8" stroke-width="0.2" textLength="10.20" lengthAdjust="spacingAndGlyphs"  xml:space="preserve">19</text>
<text x="347.50" y="96.00" font-family='"Liberation Mono"' font-size="12.2" fill="#BBB529" stroke="#BBB529" stroke-width="0.2" textLength="49.92" lengthAdjust="spacingAndGlyphs"  xml:space="preserve">#include</text>
<text x="403.66" y="96.00" font-family='"Liberation Mono"' font-size="12.2" fill="#6A8759" stroke="#6A8759" stroke-width="0.2" textLength="56.16" lengthAdjust="spacingAndGlyphs"  xml:space="preserve">&lt;stdio.h&gt;</text>
<text x="347.50" y="113.17" font-family='"Liberation Mono"' font-size="12.2" fill="#808080" stroke="#808080" stroke-width="0.2" textLength="118.56" lengthAdjust="spacingAndGlyphs"  xml:space="preserve">//#include &lt;math.h&gt;</text>
<text x="347.50" y="130.34" font-family='"Liberation Mono"' font-size="12.2" fill="#CC7832" stroke="#CC7832" stroke-width="0.2" textLength="18.72" lengthAdjust="spacingAndGlyphs"  xml:space="preserve">int</text>
<text x="372.46" y="130.34" font-family='"Liberation Mono"' font-size="12.2" fill="#FFC66D" stroke="#FFC66D" stroke-width="0.2" textLength="24.96" lengthAdjust="spacingAndGlyphs"  xml:space="preserve">main</text>
<text x="397.42" y="130.34" font-family='"Liberation Mono"' font-size="12.2" fill="#A9B7C6" stroke="#A9B7C6" stroke-width="0.2" textLength="24.96" lengthAdjust="spacingAndGlyphs"  xml:space="preserve">() {</text>
<text x="372.46" y="147.51" font-family='"Liberation Mono"' font-size="12.2" fill="#CC7832" stroke="#CC7832" stroke-width="0.2" textLength="18.72" lengthAdjust="spacingAndGlyphs"  xml:space="preserve">int</text>
<text x="391.18" y="147.51" font-family='"Liberation Mono"' font-size="12.2" fill="#A9B7C6" stroke="#A9B7C6" stroke-width="0.2" textLength="12.48" lengthAdjust="spacingAndGlyphs"  xml:space="preserve"> i</text>
<text x="403.66" y="147.51" font-family='"Liberation Mono"' font-size="12.2" fill="#CC7832" stroke="#CC7832" stroke-width="0.2" textLength="6.24" lengthAdjust="spacingAndGlyphs"  xml:space="preserve">,</text>
<text x="409.90" y="147.51" font-family='"Liberation Mono"' font-size="12.2" fill="#A9B7C6" stroke="#A9B7C6" stroke-width="0.2" textLength="12.48" lengthAdjust="spacingAndGlyphs"  xml:space="preserve"> j</text>
<text x="422.38" y="147.51" font-family='"Liberation Mono"' font-size="12.2" fill="#CC7832" stroke="#CC7832" stroke-width="0.2" textLength="6.24" lengthAdjust="spacingAndGlyphs"  xml:space="preserve">,</text>
<text x="428.62" y="147.51" font-family='"Liberation Mono"' font-size="12.2" fill="#A9B7C6" stroke="#A9B7C6" stroke-width="0.2" textLength="12.48" lengthAdjust="spacingAndGlyphs"  xml:space="preserve"> k</text>
<text x="441.10" y="147.51" font-family='"Liberation Mono"' font-size="12.2" fill="#CC7832" stroke="#CC7832" stroke-width="0.2" textLength="6.24" lengthAdjust="spacingAndGlyphs"  xml:space="preserve">;</text>
<text x="347.50" y="164.68" font-family='"Liberation Mono"' font-size="12.2" fill="#A9B7C6" stroke="#A9B7C6" stroke-width="0.2" textLength="68.64" lengthAdjust="spacingAndGlyphs"  xml:space="preserve">    printf(</text>
<rect x="418.64" y="153.68" width="45.5" height="14" rx="3" fill="#363636"/>
<text x="423.33" y="164.18" font-family='"Liberation Sans"' font-size="9.6" fill="#7A7A7A"  xml:space="preserve">_Format:</text>
<text x="466.14" y="164.68" font-family='"Liberation Mono"' font-size="12.2" fill="#6A8759" stroke="#6A8759" stroke-width="0.2" textLength="37.44" lengthAdjust="spacingAndGlyphs"  xml:space="preserve">&quot;i j k</text>
<text x="503.58" y="164.68" font-family='"Liberation Mono"' font-size="12.2" fill="#CC7832" stroke="#CC7832" stroke-width="0.2" textLength="12.48" lengthAdjust="spacingAndGlyphs"  xml:space="preserve">\n</text>
<text x="516.06" y="164.68" font-family='"Liberation Mono"' font-size="12.2" fill="#6A8759" stroke="#6A8759" stroke-width="0.2" textLength="6.24" lengthAdjust="spacingAndGlyphs"  xml:space="preserve">&quot;</text>
<text x="522.30" y="164.68" font-family='"Liberation Mono"' font-size="12.2" fill="#A9B7C6" stroke="#A9B7C6" stroke-width="0.2" textLength="6.24" lengthAdjust="spacingAndGlyphs"  xml:space="preserve">)</text>
<text x="528.54" y="164.68" font-family='"Liberation Mono"' font-size="12.2" fill="#CC7832" stroke="#CC7832" stroke-width="0.2" textLength="6.24" lengthAdjust="spacingAndGlyphs"  xml:space="preserve">;</text>
<text x="372.46" y="181.85" font-family='"Liberation Mono"' font-size="12.2" fill="#CC7832" stroke="#CC7832" stroke-width="0.2" textLength="18.72" lengthAdjust="spacingAndGlyphs"  xml:space="preserve">for</text>
<text x="391.18" y="181.85" font-family='"Liberation Mono"' font-size="12.2" fill="#A9B7C6" stroke="#A9B7C6" stroke-width="0.2" textLength="37.44" lengthAdjust="spacingAndGlyphs"  xml:space="preserve"> (i = </text>
<text x="428.62" y="181.85" font-family='"Liberation Mono"' font-size="12.2" fill="#6897BB" stroke="#6897BB" stroke-width="0.2" textLength="6.24" lengthAdjust="spacingAndGlyphs"  xml:space="preserve">0</text>
<text x="434.86" y="181.85" font-family='"Liberation Mono"' font-size="12.2" fill="#CC7832" stroke="#CC7832" stroke-width="0.2" textLength="6.24" lengthAdjust="spacingAndGlyphs"  xml:space="preserve">;</text>
<text x="441.10" y="181.85" font-family='"Liberation Mono"' font-size="12.2" fill="#A9B7C6" stroke="#A9B7C6" stroke-width="0.2" textLength="31.20" lengthAdjust="spacingAndGlyphs"  xml:space="preserve"> i &lt; </text>
<text x="472.30" y="181.85" font-family='"Liberation Mono"' font-size="12.2" fill="#6897BB" stroke="#6897BB" stroke-width="0.2" textLength="6.24" lengthAdjust="spacingAndGlyphs"  xml:space="preserve">2</text>
<text x="478.54" y="181.85" font-family='"Liberation Mono"' font-size="12.2" fill="#CC7832" stroke="#CC7832" stroke-width="0.2" textLength="6.24" lengthAdjust="spacingAndGlyphs"  xml:space="preserve">;</text>
<text x="484.78" y="181.85" font-family='"Liberation Mono"' font-size="12.2" fill="#A9B7C6" stroke="#A9B7C6" stroke-width="0.2" textLength="31.20" lengthAdjust="spacingAndGlyphs"  xml:space="preserve"> i++)</text>
<text x="397.42" y="199.02" font-family='"Liberation Mono"' font-size="12.2" fill="#CC7832" stroke="#CC7832" stroke-width="0.2" textLength="18.72" lengthAdjust="spacingAndGlyphs"  xml:space="preserve">for</text>
<text x="416.14" y="199.02" font-family='"Liberation Mono"' font-size="12.2" fill="#A9B7C6" stroke="#A9B7C6" stroke-width="0.2" textLength="37.44" lengthAdjust="spacingAndGlyphs"  xml:space="preserve"> (j = </text>
<text x="453.58" y="199.02" font-family='"Liberation Mono"' font-size="12.2" fill="#6897BB" stroke="#6897BB" stroke-width="0.2" textLength="6.24" lengthAdjust="spacingAndGlyphs"  xml:space="preserve">0</text>
<text x="459.82" y="199.02" font-family='"Liberation Mono"' font-size="12.2" fill="#CC7832" stroke="#CC7832" stroke-width="0.2" textLength="6.24" lengthAdjust="spacingAndGlyphs"  xml:space="preserve">;</text>
<text x="466.06" y="199.02" font-family='"Liberation Mono"' font-size="12.2" fill="#A9B7C6" stroke="#A9B7C6" stroke-width="0.2" textLength="31.20" lengthAdjust="spacingAndGlyphs"  xml:space="preserve"> j &lt; </text>
<text x="497.26" y="199.02" font-family='"Liberation Mono"' font-size="12.2" fill="#6897BB" stroke="#6897BB" stroke-width="0.2" textLength="6.24" lengthAdjust="spacingAndGlyphs"  xml:space="preserve">2</text>
<text x="503.50" y="199.02" font-family='"Liberation Mono"' font-size="12.2" fill="#CC7832" stroke="#CC7832" stroke-width="0.2" textLength="6.24" lengthAdjust="spacingAndGlyphs"  xml:space="preserve">;</text>
<text x="509.74" y="199.02" font-family='"Liberation Mono"' font-size="12.2" fill="#A9B7C6" stroke="#A9B7C6" stroke-width="0.2" textLength="31.20" lengthAdjust="spacingAndGlyphs"  xml:space="preserve"> j++)</text>
<text x="422.38" y="216.19" font-family='"Liberation Mono"' font-size="12.2" fill="#CC7832" stroke="#CC7832" stroke-width="0.2" textLength="18.72" lengthAdjust="spacingAndGlyphs"  xml:space="preserve">for</text>
<text x="441.10" y="216.19" font-family='"Liberation Mono"' font-size="12.2" fill="#A9B7C6" stroke="#A9B7C6" stroke-width="0.2" textLength="37.44" lengthAdjust="spacingAndGlyphs"  xml:space="preserve"> (k = </text>
<text x="478.54" y="216.19" font-family='"Liberation Mono"' font-size="12.2" fill="#6897BB" stroke="#6897BB" stroke-width="0.2" textLength="6.24" lengthAdjust="spacingAndGlyphs"  xml:space="preserve">0</text>
<text x="484.78" y="216.19" font-family='"Liberation Mono"' font-size="12.2" fill="#CC7832" stroke="#CC7832" stroke-width="0.2" textLength="6.24" lengthAdjust="spacingAndGlyphs"  xml:space="preserve">;</text>
<text x="491.02" y="216.19" font-family='"Liberation Mono"' font-size="12.2" fill="#A9B7C6" stroke="#A9B7C6" stroke-width="0.2" textLength="31.20" lengthAdjust="spacingAndGlyphs"  xml:space="preserve"> k &lt; </text>
<text x="522.22" y="216.19" font-family='"Liberation Mono"' font-size="12.2" fill="#6897BB" stroke="#6897BB" stroke-width="0.2" textLength="6.24" lengthAdjust="spacingAndGlyphs"  xml:space="preserve">2</text>
<text x="528.46" y="216.19" font-family='"Liberation Mono"' font-size="12.2" fill="#CC7832" stroke="#CC7832" stroke-width="0.2" textLength="6.24" lengthAdjust="spacingAndGlyphs"  xml:space="preserve">;</text>
<text x="534.70" y="216.19" font-family='"Liberation Mono"' font-size="12.2" fill="#A9B7C6" stroke="#A9B7C6" stroke-width="0.2" textLength="31.20" lengthAdjust="spacingAndGlyphs"  xml:space="preserve"> k++)</text>
<text x="347.50" y="233.36" font-family='"Liberation Mono"' font-size="12.2" fill="#A9B7C6" stroke="#A9B7C6" stroke-width="0.2" textLength="143.52" lengthAdjust="spacingAndGlyphs"  xml:space="preserve">                printf(</text>
<rect x="493.52" y="222.36" width="46.5" height="14" rx="3" fill="#363636"/>
<text x="498.21" y="232.86" font-family='"Liberation Sans"' font-size="9.6" fill="#7A7A7A"  xml:space="preserve">_Format:</text>
<text x="541.02" y="233.36" font-family='"Liberation Mono"' font-size="12.2" fill="#6A8759" stroke="#6A8759" stroke-width="0.2" textLength="56.16" lengthAdjust="spacingAndGlyphs"  xml:space="preserve">&quot;%d %d %d</text>
<text x="597.18" y="233.36" font-family='"Liberation Mono"' font-size="12.2" fill="#CC7832" stroke="#CC7832" stroke-width="0.2" textLength="12.48" lengthAdjust="spacingAndGlyphs"  xml:space="preserve">\n</text>
<text x="609.66" y="233.36" font-family='"Liberation Mono"' font-size="12.2" fill="#6A8759" stroke="#6A8759" stroke-width="0.2" textLength="6.24" lengthAdjust="spacingAndGlyphs"  xml:space="preserve">&quot;</text>
<text x="615.90" y="233.36" font-family='"Liberation Mono"' font-size="12.2" fill="#CC7832" stroke="#CC7832" stroke-width="0.2" textLength="6.24" lengthAdjust="spacingAndGlyphs"  xml:space="preserve">,</text>
<text x="622.14" y="233.36" font-family='"Liberation Mono"' font-size="12.2" fill="#A9B7C6" stroke="#A9B7C6" stroke-width="0.2" textLength="12.48" lengthAdjust="spacingAndGlyphs"  xml:space="preserve"> i</text>
<text x="634.62" y="233.36" font-family='"Liberation Mono"' font-size="12.2" fill="#CC7832" stroke="#CC7832" stroke-width="0.2" textLength="6.24" lengthAdjust="spacingAndGlyphs"  xml:space="preserve">,</text>
<text x="640.86" y="233.36" font-family='"Liberation Mono"' font-size="12.2" fill="#A9B7C6" stroke="#A9B7C6" stroke-width="0.2" textLength="12.48" lengthAdjust="spacingAndGlyphs"  xml:space="preserve"> j</text>
<text x="653.34" y="233.36" font-family='"Liberation Mono"' font-size="12.2" fill="#CC7832" stroke="#CC7832" stroke-width="0.2" textLength="6.24" lengthAdjust="spacingAndGlyphs"  xml:space="preserve">,</text>
<text x="659.58" y="233.36" font-family='"Liberation Mono"' font-size="12.2" fill="#A9B7C6" stroke="#A9B7C6" stroke-width="0.2" textLength="18.72" lengthAdjust="spacingAndGlyphs"  xml:space="preserve"> k)</text>
<text x="678.30" y="233.36" font-family='"Liberation Mono"' font-size="12.2" fill="#CC7832" stroke="#CC7832" stroke-width="0.2" textLength="6.24" lengthAdjust="spacingAndGlyphs"  xml:space="preserve">;</text>
<text x="372.46" y="284.87" font-family='"Liberation Mono"' font-size="12.2" fill="#CC7832" stroke="#CC7832" stroke-width="0.2" textLength="18.72" lengthAdjust="spacingAndGlyphs"  xml:space="preserve">int</text>
<text x="391.18" y="284.87" font-family='"Liberation Mono"' font-size="12.2" fill="#A9B7C6" stroke="#A9B7C6" stroke-width="0.2" textLength="12.48" lengthAdjust="spacingAndGlyphs"  xml:space="preserve"> a</text>
<text x="403.66" y="284.87" font-family='"Liberation Mono"' font-size="12.2" fill="#CC7832" stroke="#CC7832" stroke-width="0.2" textLength="6.24" lengthAdjust="spacingAndGlyphs"  xml:space="preserve">,</text>
<text x="409.90" y="284.87" font-family='"Liberation Mono"' font-size="12.2" fill="#A9B7C6" stroke="#A9B7C6" stroke-width="0.2" textLength="12.48" lengthAdjust="spacingAndGlyphs"  xml:space="preserve"> b</text>
<text x="422.38" y="284.87" font-family='"Liberation Mono"' font-size="12.2" fill="#CC7832" stroke="#CC7832" stroke-width="0.2" textLength="6.24" lengthAdjust="spacingAndGlyphs"  xml:space="preserve">;</text>
<text x="372.46" y="302.04" font-family='"Liberation Mono"' font-size="12.2" fill="#CC7832" stroke="#CC7832" stroke-width="0.2" textLength="18.72" lengthAdjust="spacingAndGlyphs"  xml:space="preserve">for</text>
<text x="391.18" y="302.04" font-family='"Liberation Mono"' font-size="12.2" fill="#A9B7C6" stroke="#A9B7C6" stroke-width="0.2" textLength="37.44" lengthAdjust="spacingAndGlyphs"  xml:space="preserve"> (a = </text>
<text x="428.62" y="302.04" font-family='"Liberation Mono"' font-size="12.2" fill="#6897BB" stroke="#6897BB" stroke-width="0.2" textLength="6.24" lengthAdjust="spacingAndGlyphs"  xml:space="preserve">1</text>
<text x="434.86" y="302.04" font-family='"Liberation Mono"' font-size="12.2" fill="#CC7832" stroke="#CC7832" stroke-width="0.2" textLength="6.24" lengthAdjust="spacingAndGlyphs"  xml:space="preserve">;</text>
<text x="441.10" y="302.04" font-family='"Liberation Mono"' font-size="12.2" fill="#A9B7C6" stroke="#A9B7C6" stroke-width="0.2" textLength="31.20" lengthAdjust="spacingAndGlyphs"  xml:space="preserve"> a &lt; </text>
<text x="472.30" y="302.04" font-family='"Liberation Mono"' font-size="12.2" fill="#6897BB" stroke="#6897BB" stroke-width="0.2" textLength="6.24" lengthAdjust="spacingAndGlyphs"  xml:space="preserve">7</text>
<text x="478.54" y="302.04" font-family='"Liberation Mono"' font-size="12.2" fill="#CC7832" stroke="#CC7832" stroke-width="0.2" textLength="6.24" lengthAdjust="spacingAndGlyphs"  xml:space="preserve">;</text>
<text x="484.78" y="302.04" font-family='"Liberation Mono"' font-size="12.2" fill="#A9B7C6" stroke="#A9B7C6" stroke-width="0.2" textLength="37.44" lengthAdjust="spacingAndGlyphs"  xml:space="preserve"> a++) </text>
<text x="522.22" y="302.04" font-family='"Liberation Mono"' font-size="12.2" fill="#FFEF28" stroke="#FFEF28" stroke-width="0.2" textLength="6.24" lengthAdjust="spacingAndGlyphs"  xml:space="preserve">{</text>
<text x="347.50" y="319.21" font-family='"Liberation Mono"' font-size="12.2" fill="#A9B7C6" stroke="#A9B7C6" stroke-width="0.2" textLength="93.60" lengthAdjust="spacingAndGlyphs"  xml:space="preserve">        printf(</text>
<rect x="443.60" y="308.21" width="47.4" height="14" rx="3" fill="#363636"/>
<text x="448.29" y="318.71" font-family='"Liberation Sans"' font-size="9.6" fill="#7A7A7A"  xml:space="preserve">_Format:</text>
<text x="491.30" y="319.21" font-family='"Liberation Mono"' font-size="12.2" fill="#6A8759" stroke="#6A8759" stroke-width="0.2" textLength="6.24" lengthAdjust="spacingAndGlyphs"  xml:space="preserve">&quot;</text>
<text x="497.54" y="319.21" font-family='"Liberation Mono"' font-size="12.2" fill="#CC7832" stroke="#CC7832" stroke-width="0.2" textLength="12.48" lengthAdjust="spacingAndGlyphs"  xml:space="preserve">\n</text>
<text x="510.02" y="319.21" font-family='"Liberation Mono"' font-size="12.2" fill="#6A8759" stroke="#6A8759" stroke-width="0.2" textLength="6.24" lengthAdjust="spacingAndGlyphs"  xml:space="preserve">&quot;</text>
<text x="516.26" y="319.21" font-family='"Liberation Mono"' font-size="12.2" fill="#A9B7C6" stroke="#A9B7C6" stroke-width="0.2" textLength="6.24" lengthAdjust="spacingAndGlyphs"  xml:space="preserve">)</text>
<text x="522.50" y="319.21" font-family='"Liberation Mono"' font-size="12.2" fill="#CC7832" stroke="#CC7832" stroke-width="0.2" textLength="6.24" lengthAdjust="spacingAndGlyphs"  xml:space="preserve">;</text>
<text x="397.42" y="336.38" font-family='"Liberation Mono"' font-size="12.2" fill="#CC7832" stroke="#CC7832" stroke-width="0.2" textLength="18.72" lengthAdjust="spacingAndGlyphs"  xml:space="preserve">for</text>
<text x="416.14" y="336.38" font-family='"Liberation Mono"' font-size="12.2" fill="#A9B7C6" stroke="#A9B7C6" stroke-width="0.2" textLength="37.44" lengthAdjust="spacingAndGlyphs"  xml:space="preserve"> (b = </text>
<text x="453.58" y="336.38" font-family='"Liberation Mono"' font-size="12.2" fill="#6897BB" stroke="#6897BB" stroke-width="0.2" textLength="6.24" lengthAdjust="spacingAndGlyphs"  xml:space="preserve">1</text>
<text x="459.82" y="336.38" font-family='"Liberation Mono"' font-size="12.2" fill="#CC7832" stroke="#CC7832" stroke-width="0.2" textLength="6.24" lengthAdjust="spacingAndGlyphs"  xml:space="preserve">;</text>
<text x="466.06" y="336.38" font-family='"Liberation Mono"' font-size="12.2" fill="#A9B7C6" stroke="#A9B7C6" stroke-width="0.2" textLength="43.68" lengthAdjust="spacingAndGlyphs"  xml:space="preserve"> b &lt;= a</text>
<text x="509.74" y="336.38" font-family='"Liberation Mono"' font-size="12.2" fill="#CC7832" stroke="#CC7832" stroke-width="0.2" textLength="6.24" lengthAdjust="spacingAndGlyphs"  xml:space="preserve">;</text>
<text x="515.98" y="336.38" font-family='"Liberation Mono"' font-size="12.2" fill="#A9B7C6" stroke="#A9B7C6" stroke-width="0.2" textLength="43.68" lengthAdjust="spacingAndGlyphs"  xml:space="preserve"> b++) {</text>
<text x="347.50" y="353.55" font-family='"Liberation Mono"' font-size="12.2" fill="#A9B7C6" stroke="#A9B7C6" stroke-width="0.2" textLength="124.80" lengthAdjust="spacingAndGlyphs"  xml:space="preserve">            putchar(</text>
<rect x="474.80" y="342.55" width="25.4" height="14" rx="3" fill="#363636"/>
<text x="479.49" y="353.05" font-family='"Liberation Sans"' font-size="9.6" fill="#7A7A7A"  xml:space="preserve">_Ch:</text>
<text x="503.50" y="353.55" font-family='"Liberation Mono"' font-size="12.2" fill="#6A8759" stroke="#6A8759" stroke-width="0.2" textLength="18.72" lengthAdjust="spacingAndGlyphs"  xml:space="preserve">&#x27;*&#x27;</text>
<text x="522.22" y="353.55" font-family='"Liberation Mono"' font-size="12.2" fill="#A9B7C6" stroke="#A9B7C6" stroke-width="0.2" textLength="6.24" lengthAdjust="spacingAndGlyphs"  xml:space="preserve">)</text>
<text x="528.46" y="353.55" font-family='"Liberation Mono"' font-size="12.2" fill="#CC7832" stroke="#CC7832" stroke-width="0.2" textLength="6.24" lengthAdjust="spacingAndGlyphs"  xml:space="preserve">;</text>
<text x="347.50" y="370.72" font-family='"Liberation Mono"' font-size="12.2" fill="#A9B7C6" stroke="#A9B7C6" stroke-width="0.2" textLength="56.16" lengthAdjust="spacingAndGlyphs"  xml:space="preserve">        }</text>
<text x="372.46" y="387.89" font-family='"Liberation Mono"' font-size="12.2" fill="#FFEF28" stroke="#FFEF28" stroke-width="0.2" textLength="6.24" lengthAdjust="spacingAndGlyphs"  xml:space="preserve">}</text>
<text x="367.30" y="410.00" font-family='"Liberation Sans"' font-size="10.2" fill="#BBBBBB" textLength="21.98" lengthAdjust="spacingAndGlyphs"  xml:space="preserve">main</text>
<text x="22.40" y="430.30" font-family='"Liberation Sans"' font-size="10.2" fill="#BBBBBB" textLength="19.42" lengthAdjust="spacingAndGlyphs"  xml:space="preserve">Run:</text>
<text x="73.00" y="430.30" font-family='"Liberation Sans"' font-size="10.2" fill="#BBBBBB" textLength="21.18" lengthAdjust="spacingAndGlyphs"  xml:space="preserve">main</text>
<text x="140.20" y="430.30" font-family='"Liberation Sans"' font-size="10.2" fill="#BBBBBB" textLength="26.19" lengthAdjust="spacingAndGlyphs"  xml:space="preserve">main1</text>
<rect x="114.70" y="434.50" width="72.00" height="2.00" fill="#9C9C9C" />
<text x="71.70" y="449.60" font-family='"Liberation Mono"' font-size="12.2" fill="#BBBBBB" stroke="#BBBBBB" stroke-width="0.2" textLength="312.00" lengthAdjust="spacingAndGlyphs"  xml:space="preserve">D:\Design\study\CStudy\cmake-build-debug\main1.exe</text>
<text x="71.70" y="466.85" font-family='"Liberation Mono"' font-size="12.2" fill="#BBBBBB" stroke="#BBBBBB" stroke-width="0.2" textLength="31.20" lengthAdjust="spacingAndGlyphs"  xml:space="preserve">i j k</text>
<text x="71.70" y="484.10" font-family='"Liberation Mono"' font-size="12.2" fill="#BBBBBB" stroke="#BBBBBB" stroke-width="0.2" textLength="31.20" lengthAdjust="spacingAndGlyphs"  xml:space="preserve">0 0 0</text>
<text x="71.70" y="501.35" font-family='"Liberation Mono"' font-size="12.2" fill="#BBBBBB" stroke="#BBBBBB" stroke-width="0.2" textLength="31.20" lengthAdjust="spacingAndGlyphs"  xml:space="preserve">0 0 1</text>
<text x="71.70" y="518.60" font-family='"Liberation Mono"' font-size="12.2" fill="#BBBBBB" stroke="#BBBBBB" stroke-width="0.2" textLength="31.20" lengthAdjust="spacingAndGlyphs"  xml:space="preserve">0 1 0</text>
<text x="71.70" y="535.85" font-family='"Liberation Mono"' font-size="12.2" fill="#BBBBBB" stroke="#BBBBBB" stroke-width="0.2" textLength="31.20" lengthAdjust="spacingAndGlyphs"  xml:space="preserve">0 1 1</text>
<text x="71.70" y="553.10" font-family='"Liberation Mono"' font-size="12.2" fill="#BBBBBB" stroke="#BBBBBB" stroke-width="0.2" textLength="31.20" lengthAdjust="spacingAndGlyphs"  xml:space="preserve">1 0 0</text>
<text x="71.70" y="570.35" font-family='"Liberation Mono"' font-size="12.2" fill="#BBBBBB" stroke="#BBBBBB" stroke-width="0.2" textLength="31.20" lengthAdjust="spacingAndGlyphs"  xml:space="preserve">1 0 1</text>
<text x="71.70" y="587.60" font-family='"Liberation Mono"' font-size="12.2" fill="#BBBBBB" stroke="#BBBBBB" stroke-width="0.2" textLength="31.20" lengthAdjust="spacingAndGlyphs"  xml:space="preserve">1 1 0</text>
<text x="71.70" y="604.85" font-family='"Liberation Mono"' font-size="12.2" fill="#BBBBBB" stroke="#BBBBBB" stroke-width="0.2" textLength="31.20" lengthAdjust="spacingAndGlyphs"  xml:space="preserve">1 1 1</text>
<text x="37.00" y="624.00" font-family='"Liberation Sans"' font-size="9.4" fill="#BBBBBB" textLength="15.00" lengthAdjust="spacingAndGlyphs"  xml:space="preserve">Run</text>
<text x="80.00" y="624.00" font-family='"Liberation Sans"' font-size="9.4" fill="#BBBBBB" textLength="24.01" lengthAdjust="spacingAndGlyphs"  xml:space="preserve">TODO</text>
<text x="133.00" y="624.00" font-family='"Liberation Sans"' font-size="9.4" fill="#BBBBBB" textLength="35.99" lengthAdjust="spacingAndGlyphs"  xml:space="preserve">Problems</text>
<text x="199.00" y="624.00" font-family='"Liberation Sans"' font-size="9.4" fill="#BBBBBB" textLength="31.99" lengthAdjust="spacingAndGlyphs"  xml:space="preserve">Terminal</text>
<text x="260.00" y="624.00" font-family='"Liberation Sans"' font-size="9.4" fill="#BBBBBB" textLength="26.98" lengthAdjust="spacingAndGlyphs"  xml:space="preserve">CMake</text>
<text x="317.50" y="624.00" font-family='"Liberation Sans"' font-size="9.4" fill="#BBBBBB" textLength="65.48" lengthAdjust="spacingAndGlyphs"  xml:space="preserve">Python Packages</text>
<text x="414.50" y="624.00" font-family='"Liberation Sans"' font-size="9.4" fill="#BBBBBB" textLength="37.48" lengthAdjust="spacingAndGlyphs"  xml:space="preserve">Messages</text>
<text x="1137.50" y="624.00" font-family='"Liberation Sans"' font-size="9.4" fill="#BBBBBB" textLength="37.99" lengthAdjust="spacingAndGlyphs"  xml:space="preserve">Event Log</text>
<text x="21.50" y="639.60" font-family='"Liberation Sans"' font-size="9.4" fill="#BBBBBB" textLength="147.48" lengthAdjust="spacingAndGlyphs"  xml:space="preserve">Process finished with exit code 0</text>
<text x="1044.60" y="639.60" font-family='"Liberation Sans"' font-size="9.4" fill="#BBBBBB" textLength="19.11" lengthAdjust="spacingAndGlyphs"  xml:space="preserve">19:6</text>
<text x="1073.70" y="639.60" font-family='"Liberation Sans"' font-size="9.4" fill="#BBBBBB" textLength="22.31" lengthAdjust="spacingAndGlyphs"  xml:space="preserve">CRLF</text>
<text x="1105.70" y="639.60" font-family='"Liberation Sans"' font-size="9.4" fill="#BBBBBB" textLength="18.32" lengthAdjust="spacingAndGlyphs"  xml:space="preserve">GBK</text>
<text x="1133.00" y="639.60" font-family='"Liberation Sans"' font-size="9.4" fill="#BBBBBB" textLength="38.98" lengthAdjust="spacingAndGlyphs"  xml:space="preserve">4 spaces</text>
<path d="M12.3 654 L18.2 653.2 V659 H12.3 Z M19.2 653 L25 652.2 V659 H19.2 Z M12.3 660 H18.2 V665.8 L12.3 665 Z M19.2 660 H25 V666.6 L19.2 665.9 Z" fill="#111"/>
<circle cx="55.3" cy="657" r="4.3" stroke="#222" stroke-width="1.1" fill="none"/><path d="M52.2 660.2 L47.5 665.2" stroke="#222" stroke-width="1.2"/>
<path transform="translate(69.00 653.3)" d="M1 3h9M4 0.5L1 7M3 5v6.5M6 4v7M4 6.5h5M4 11.5h6" stroke="#333" stroke-width="0.85" fill="none"/>
<path transform="translate(80.85 653.3)" d="M1 1l1.5 1.5M0.5 5h2v5l-1.5 1.5M1 11.5h9.5M6 0.5v1.5M3.5 2.5h6.5M4.5 5l4.5 5M9 5l-4.5 5" stroke="#333" stroke-width="0.85" fill="none"/>
<path transform="translate(92.70 653.3)" d="M1.5 1h8v5.5h-8zM1.5 3.7h8M5.5 1v10M2 8.5h7M0.5 11.5h10" stroke="#333" stroke-width="0.85" fill="none"/>
<path transform="translate(104.55 653.3)" d="M0.5 2.5h4M2.5 0.5v11M0.5 7h4M7.5 0.5l-3 3M7.5 0.5l3 3M5.5 5h4v6.5M5.5 5v6.5M8 6v4M6 7.5h3" stroke="#333" stroke-width="0.85" fill="none"/>
<path transform="translate(116.40 653.3)" d="M3 0.5l2 2M5 2.5l-4.5 9M5 3l5.5 8.5" stroke="#333" stroke-width="0.85" fill="none"/>
<path transform="translate(128.25 653.3)" d="M3 0.5l-2.5 5M2 4v7.5M5 0.5l-1 3M4.5 3h6v2M7.5 3v8.5l-1-1M5 6l-1 3M9 6l1.5 3" stroke="#333" stroke-width="0.85" fill="none"/>
<path transform="translate(140.10 653.3)" d="M0.5 1h10M3.5 1v3.5M7 1v3.5M1.5 2.5h8v3h-8zM0.5 7h10M5 6l-2.5 5M2.5 9l6 2.5M8 7l-4 4.5" stroke="#333" stroke-width="0.85" fill="none"/>
<path transform="translate(151.95 653.3)" d="M0.5 3h4M2.5 0.5v11l-1-1M0.5 7.5l4-1.5M6 1h4v4h-4zM8 0.5v6M5.5 7h5M6 7l4 4.5M10 7l-4 4.5" stroke="#333" stroke-width="0.85" fill="none"/>
<path transform="translate(163.80 653.3)" d="M5.5 0.5v2M1 2h9M1 4v-1h9v1M3 5l5-1M6 5l-3 3h5M5.5 8v3.5M3 10l-2 1.5M8 10l2 1.5" stroke="#333" stroke-width="0.85" fill="none"/>
<path transform="translate(175.65 653.3)" d="M2.5 0.5l-1 2M1 2.5h3.5v9h-3.5zM1 7h3.5M7 0.5l-1 3M6.5 3h4v8l-1.5-1M7 5.5l1 2" stroke="#333" stroke-width="0.85" fill="none"/>
<path transform="translate(187.50 653.3)" d="M5.5 0.5v5M1 3h9v8.5l-1-1M1 3v8.5M5.5 4l-3 4M5.5 5l3 3" stroke="#333" stroke-width="0.85" fill="none"/>
<path transform="translate(199.35 653.3)" d="M5.5 0.5v1.5M0.5 3.5v-1.5h10v1.5M3 3l-1.5 1.5M8 3l1.5 1.5M5.5 4l-4.5 3.5M5.5 4l4.5 3.5M2.5 8h6v3.5h-6z" stroke="#333" stroke-width="0.85" fill="none"/>
<circle cx="325" cy="659" r="5.3" stroke="#111" stroke-width="1.5" fill="none"/>
<path d="M356 653.5 h3 M356 664.5 h3 M357.5 653.5 v11 M359.5 655.5 h5 v7 h-5 z M366.5 653.5 v11" stroke="#222" stroke-width="1.2" fill="none"/>
<circle cx="402.4" cy="659" r="9.5" fill="#2B7CD3"/><rect x="398.3" y="652.3" width="8.2" height="13.3" rx="1.5" fill="#fff"/><rect x="399.5" y="654" width="5.8" height="9.5" fill="#2B7CD3"/>
<circle cx="441" cy="659" r="9" fill="#DB4437"/>
<path d="M441 659 L433.2 654.5 A9 9 0 0 0 436.5 666.8 Z" fill="#0F9D58"/>
<path d="M441 659 L436.5 666.8 A9 9 0 0 0 450 659 L449.5 654.5 Z" fill="#F4B400"/>
<circle cx="441" cy="659" r="4" fill="#fff"/><circle cx="441" cy="659" r="3.1" fill="#4285F4"/>
<ellipse cx="476.5" cy="656.5" rx="6.3" ry="5.3" fill="#2DC100"/><path d="M472.5 660.5 l-1 2.5 l3 -1.5 Z" fill="#2DC100"/>
<ellipse cx="482.5" cy="661" rx="5.5" ry="4.6" fill="#F2F2F2"/><circle cx="480.5" cy="660.5" r="0.8" fill="#555"/><circle cx="484.5" cy="660.5" r="0.8" fill="#555"/>
<defs><linearGradient id="edg" x1="0.9" y1="0.1" x2="0.1" y2="0.9"><stop offset="0" stop-color="#55D65A"/><stop offset="0.35" stop-color="#2AB7C9"/><stop offset="1" stop-color="#1463C8"/></linearGradient></defs>
<circle cx="518" cy="659" r="9.5" fill="url(#edg)"/>
<path d="M509.5 663 Q512 668.5 518.5 668.5 Q524.5 668.5 526.5 664 Q522 666.5 518.5 664.5 Q515 662 516 658 Q512 659 509.5 663 Z" fill="#0F3F96" opacity="0.85"/>
<ellipse cx="520.3" cy="659.6" rx="3.1" ry="2.3" fill="#D5EEF3"/>
<rect x="539.00" y="644.00" width="38.00" height="31.00" fill="#EEF0EE" />
<defs><linearGradient id="clg" x1="1" y1="0" x2="0" y2="1"><stop offset="0" stop-color="#2FD08A"/><stop offset="0.55" stop-color="#1BAE90"/><stop offset="1" stop-color="#1C8FC4"/></linearGradient></defs>
<path d="M549 652 Q553 649 557 650.5 L564 651.5 Q567 655 566 660 L565.5 665.5 Q560 669.5 554 668.5 L548.5 666 Q547.5 659 549 652 Z" fill="url(#clg)"/>
<circle cx="556" cy="651.8" r="2.4" fill="#C8557C"/>
<rect x="552.00" y="653.70" width="11.00" height="10.80" fill="#000" />
<text x="553" y="659.6" font-family="'Liberation Sans'" font-weight="bold" font-size="5.8" fill="#fff">CL</text>
<rect x="553.00" y="662.30" width="4.00" height="0.90" fill="#ddd" />
<rect x="589" y="652" width="11" height="16" rx="1" fill="#F6D365"/><rect x="591" y="652" width="8" height="16" fill="#FFE08A"/>
<rect x="387.00" y="673.00" width="31.00" height="2.00" fill="#D8541E" />
<rect x="425.60" y="673.00" width="31.40" height="2.00" fill="#D8541E" />
<rect x="464.00" y="673.00" width="32.00" height="2.00" fill="#D8541E" />
<rect x="503.00" y="673.00" width="32.00" height="2.00" fill="#D8541E" />
<rect x="539.00" y="673.00" width="38.00" height="2.00" fill="#D8541E" />
<rect x="581.00" y="673.00" width="32.00" height="2.00" fill="#D8541E" />
<path d="M975 662 L980 656.5 L985 662" stroke="#222" stroke-width="1.1" fill="none"/>
<rect x="994.5" y="656.5" width="10.5" height="5.5" fill="#111"/><circle cx="994" cy="656.5" r="1.5" fill="#111"/>
<path d="M1014 664 a9 9 0 0 1 8.5 -8.5 M1016 664 a6.5 6.5 0 0 1 6.5 -6.5 M1018 664 a4 4 0 0 1 4.5 -4" stroke="#333" stroke-width="0.9" fill="none"/><circle cx="1021.5" cy="663.5" r="0.9" fill="#222"/>
<path d="M1030.5 657.5 h2 l3 -2.5 v9 l-3 -2.5 h-2 z" stroke="#222" stroke-width="0.9" fill="none"/><path d="M1037 657.5 q1.3 2 0 4" stroke="#222" stroke-width="0.9" fill="none"/>
<path d="M1048.8 656.5 h11 M1052 654.5 v3.5 M1056.5 654.5 v3.5 M1050 659 h8.5 v3 h-8.5 z M1054.2 657.5 v4.5 l-4.5 3.5 M1054.5 662.5 l5 2.8" stroke="#222" stroke-width="0.9" fill="none"/>
<text x="1083.90" y="655.60" font-family='"Liberation Sans"' font-size="9.2" fill="#1E1E1E" textLength="17.21" lengthAdjust="spacingAndGlyphs"  xml:space="preserve">1:29</text>
<text x="1068.90" y="669.50" font-family='"Liberation Sans"' font-size="9.2" fill="#1E1E1E" textLength="46.09" lengthAdjust="spacingAndGlyphs"  xml:space="preserve">2021/5/16</text>
<path d="M1133 654.3 h2 v6.8 h-2 Z M1133 662.2 h2 v2.8 h-2 Z M1145.1 654.3 h2 v10.7 h-2 Z" fill="#111"/>
<path d="M1137 665 v-7.4 l3 3.8 l3 -3.8 v7.4" stroke="#111" stroke-width="1.5" fill="none"/>
<rect x="1168.30" y="653.00" width="12.70" height="10.30" fill="#111" />
<rect x="1170.50" y="655.50" width="8.00" height="1.20" fill="#888" />
<circle cx="1180.5" cy="665.5" r="5.5" fill="#DADFDA" stroke="#555" stroke-width="0.6"/><path d="M1180.5 662.5 v5.5" stroke="#111" stroke-width="1.1"/>
<rect x="1196.00" y="644.00" width="1.00" height="31.00" fill="#B8BCB8" />
</svg>

</body></html>
